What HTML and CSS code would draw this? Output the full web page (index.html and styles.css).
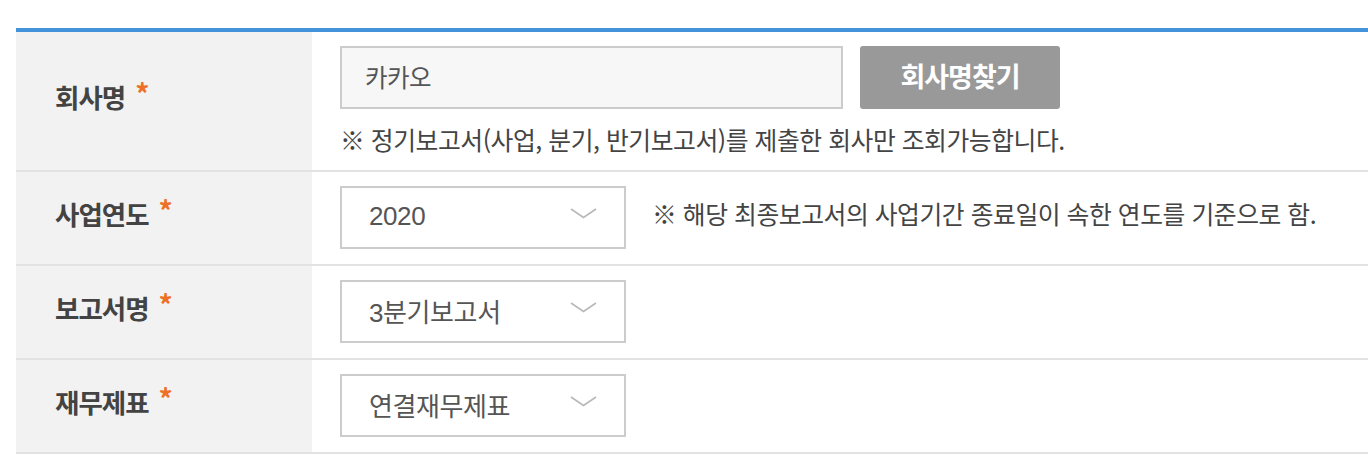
FILE: index.html
```html
<!DOCTYPE html>
<html lang="ko">
<head>
<meta charset="utf-8">
<title>재무정보 조회</title>
<link rel="stylesheet" href="styles.css">
</head>
<body>
<div class="form-table">
  <div class="row row-company">
    <div class="label">회사명<span class="req">*</span></div>
    <div class="cell">
      <div class="input-line">
        <div class="text-input">카카오</div>
        <button class="btn-find" type="button">회사명찾기</button>
      </div>
      <p class="note">※ 정기보고서(사업, 분기, 반기보고서)를 제출한 회사만 조회가능합니다.</p>
    </div>
  </div>
  <div class="row">
    <div class="label">사업연도<span class="req">*</span></div>
    <div class="cell cell-inline">
      <div class="select"><span class="select-value">2020</span><svg class="chev" width="27" height="11" viewBox="0 0 27 11"><path d="M1 1 L13.5 9.5 L26 1" fill="none" stroke="#b8b8b8" stroke-width="1.6"/></svg></div>
      <p class="note note-inline">※ 해당 최종보고서의 사업기간 종료일이 속한 연도를 기준으로 함.</p>
    </div>
  </div>
  <div class="row">
    <div class="label">보고서명<span class="req">*</span></div>
    <div class="cell cell-inline">
      <div class="select"><span class="select-value">3분기보고서</span><svg class="chev" width="27" height="11" viewBox="0 0 27 11"><path d="M1 1 L13.5 9.5 L26 1" fill="none" stroke="#b8b8b8" stroke-width="1.6"/></svg></div>
    </div>
  </div>
  <div class="row">
    <div class="label">재무제표<span class="req">*</span></div>
    <div class="cell cell-inline">
      <div class="select"><span class="select-value">연결재무제표</span><svg class="chev" width="27" height="11" viewBox="0 0 27 11"><path d="M1 1 L13.5 9.5 L26 1" fill="none" stroke="#b8b8b8" stroke-width="1.6"/></svg></div>
    </div>
  </div>
</div>
</body>
</html>
```
FILE: styles.css
```css
html, body {
  margin: 0;
  padding: 0;
  background: #ffffff;
}
body {
  padding: 28px 0 0 16px;
  font-family: "Noto Sans CJK KR", "Noto Sans", sans-serif;
  color: #444444;
  overflow: hidden;
}
.form-table {
  border-top: 4px solid #4393db;
  width: 1352px;
}
.row {
  display: flex;
  border-bottom: 2px solid #e2e2e2;
  min-height: 92px;
}
.label {
  width: 257px;
  flex: none;
  background: #f2f2f2;
  padding-left: 39px;
  padding-bottom: 9px;
  display: flex;
  align-items: center;
  font-size: 26.5px;
  font-weight: 700;
  letter-spacing: -1px;
  color: #434343;
}
.req {
  color: #ee7026;
  margin-left: 10px;
  font-size: 28px;
  line-height: 1;
  align-self: center;
  margin-top: -8px;
}
.cell {
  flex: 1;
  padding: 14px 0 0 28px;
}
.row-company .cell {
  padding-bottom: 13px;
}
.cell-inline {
  display: flex;
  align-items: flex-start;
  padding-bottom: 15px;
}
.input-line {
  display: flex;
  gap: 17px;
}
.text-input {
  box-sizing: border-box;
  width: 503px;
  height: 63px;
  border: 2px solid #cccccc;
  background: #f7f7f7;
  padding: 0 0 2px 23px;
  display: flex;
  align-items: center;
  font-size: 24.5px;
  color: #555555;
  letter-spacing: -0.5px;
}
.btn-find {
  box-sizing: border-box;
  width: 200px;
  height: 63px;
  border: none;
  border-radius: 3px;
  background: #999999;
  color: #ffffff;
  font-family: inherit;
  font-size: 27px;
  font-weight: 700;
  letter-spacing: -1px;
  padding: 0 0 4px;
}
.note {
  margin: 0;
  font-size: 24.8px;
  line-height: 35px;
  color: #444444;
  letter-spacing: -0.45px;
}
.row-company .note {
  margin-top: 13px;
}
.note-inline {
  margin-left: 26px;
  margin-top: 10px;
}
.select {
  box-sizing: border-box;
  width: 286px;
  height: 63px;
  border: 2px solid #cccccc;
  background: #ffffff;
  padding: 0 27px 0 27px;
  display: flex;
  align-items: center;
  justify-content: space-between;
  flex: none;
}
.select-value {
  font-family: "Liberation Sans", "Noto Sans CJK KR", sans-serif;
  font-size: 26px;
  color: #555555;
  letter-spacing: -0.4px;
  padding-bottom: 2px;
}
.chev {
  display: block;
  margin-bottom: 9px;
}
```
